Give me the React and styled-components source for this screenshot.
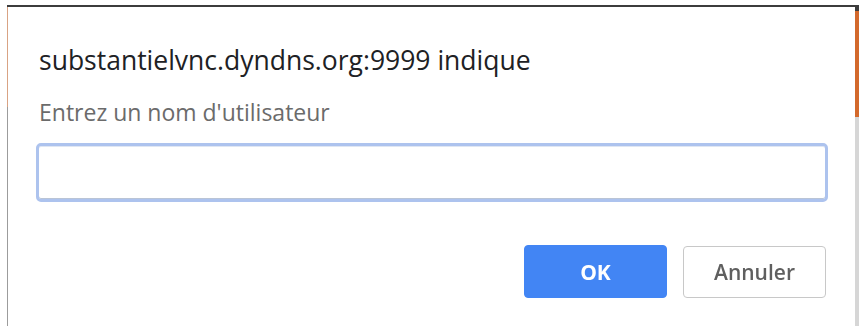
import React from 'react'
import styled, { createGlobalStyle } from 'styled-components'

const GlobalStyle = createGlobalStyle`
	html, body {
		margin: 0;
		padding: 0;
		background: #ffffff;
	}
	body {
		font-family: 'Open Sans', 'Noto Sans', sans-serif;
	}
`

const Screen = styled.div`
	display: grid;
	grid-template-columns: 7px 1fr 4px;
	width: 859px;
	height: 326px;
	overflow: hidden;
	background: #ffffff;
`

const Dialog = styled.div`
	margin-top: 5px;
	display: grid;
	grid-template-columns: 1px 1fr;
	border-top: 2px solid #3c3c3c;
	background: #ffffff;
`

const Edge = styled.div`
	background: ${(p) => p.$colors};
`

const RightEdge = styled.div`
	margin-top: 5px;
	background: linear-gradient(
		#3c3c3c 0 6px,
		#d3692c 6px 112px,
		#d6d6d6 112px
	);
`

const Body = styled.div`
	padding: 0 27px 0 28px;
	display: flex;
	flex-direction: column;
`

const Title = styled.div`
	margin: 37px 0 0 3px;
	font-size: 26.5px;
	line-height: 32px;
	color: #202124;
	white-space: nowrap;
`

const Message = styled.div`
	margin: 22px 0 0 3px;
	font-size: 23px;
	line-height: 28px;
	color: #6b6b6b;
	white-space: nowrap;
`

const Field = styled.input`
	box-sizing: border-box;
	margin-top: 17px;
	width: 100%;
	height: 59px;
	border: 3px solid #adc3ee;
	border-radius: 5px;
	box-shadow: inset 0 -1px 0 #b9c4d6, inset 0 1px 0 #dfe6f3;
	outline: none;
	background: #ffffff;
	font-family: inherit;
	font-size: 20px;
	padding: 0 10px;
`

const Actions = styled.div`
	margin-top: 43px;
	padding-right: 2px;
	display: flex;
	justify-content: flex-end;
	align-items: flex-start;
	gap: 16px;
`

const Button = styled.button`
	box-sizing: border-box;
	width: 143px;
	height: ${(p) => (p.$primary ? '53px' : '52px')};
	margin-top: ${(p) => (p.$primary ? '0' : '1px')};
	border-radius: 4px;
	border: 1px solid ${(p) => (p.$primary ? '#4285f4' : '#c8c8c8')};
	background: ${(p) => (p.$primary ? '#4285f4' : '#ffffff')};
	color: ${(p) => (p.$primary ? '#ffffff' : '#5f5f5f')};
	font-family: 'Open Sans', 'Noto Sans', sans-serif;
	font-size: 21px;
	font-weight: ${(p) => (p.$primary ? 700 : 600)};
	cursor: pointer;
`

export default function App() {
	return (
		<Screen>
			<GlobalStyle />
			<div />
			<Dialog>
				<Edge $colors="linear-gradient(#d9a384 0 100px, #9c9c9c 100px)" />
				<Body>
					<Title>substantielvnc.dyndns.org:9999 indique</Title>
					<Message>Entrez un nom d'utilisateur</Message>
					<Field type="text" autoFocus />
					<Actions>
						<Button $primary>OK</Button>
						<Button>Annuler</Button>
					</Actions>
				</Body>
			</Dialog>
			<RightEdge />
		</Screen>
	)
}
